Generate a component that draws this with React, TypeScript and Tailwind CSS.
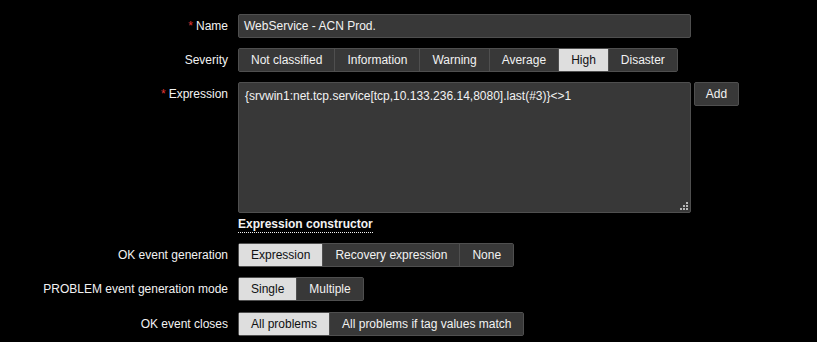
import React from "react"

type Seg = { label: string; active?: boolean }

function Segmented({ items }: { items: Seg[] }) {
  return (
    <div className="flex h-[24px] rounded-[2px] border border-[#4f4f4f]">
      {items.map((it, i) => (
        <span
          key={it.label}
          className={
            "flex items-center px-[12px] leading-[22px] " +
            (i > 0 ? "border-l border-[#4f4f4f] " : "") +
            (it.active ? "bg-[#dedede] text-[#0e1012]" : "bg-[#383838] text-[#f2f2f2]")
          }
        >
          {it.label}
        </span>
      ))}
    </div>
  )
}

function Label({ text, required, top }: { text: string; required?: boolean; top?: boolean }) {
  return (
    <div
      className={
        "w-[238px] shrink-0 pr-[10px] text-right text-[#f2f2f2] " +
        (top ? "pt-[3px]" : "flex items-center justify-end")
      }
    >
      {required && <span className="mr-[3px] text-[#e33734]">*</span>}
      {text}
    </div>
  )
}

export default function App() {
  return (
    <div className="h-[342px] w-[817px] overflow-hidden bg-black pt-[14px] font-['Liberation_Sans',Arial,sans-serif] text-[12px]">
      <div className="flex flex-col gap-[10px]">
        <div className="flex h-[24px]">
          <Label text="Name" required />
          <div className="flex h-[24px] w-[453px] items-center rounded-[2px] border border-[#4f4f4f] bg-[#383838] px-[5px] text-[#f2f2f2]">
            WebService - ACN Prod.
          </div>
        </div>

        <div className="flex h-[24px]">
          <Label text="Severity" />
          <Segmented
            items={[
              { label: "Not classified" },
              { label: "Information" },
              { label: "Warning" },
              { label: "Average" },
              { label: "High", active: true },
              { label: "Disaster" },
            ]}
          />
        </div>

        <div className="flex">
          <Label text="Expression" required top />
          <div className="flex flex-col">
            <div className="flex gap-[3px]">
              <div className="relative h-[131px] w-[453px] rounded-[2px] border border-[#4f4f4f] bg-[#383838] px-[6px] pt-[4px] text-[#f2f2f2]">
                {"{srvwin1:net.tcp.service[tcp,10.133.236.14,8080].last(#3)}<>1"}
                <svg className="absolute bottom-[2px] right-[2px]" width="8" height="8" viewBox="0 0 8 8">
                  <g fill="#b8b8b8">
                    <rect x="6" y="0" width="2" height="2" />
                    <rect x="3" y="3" width="2" height="2" />
                    <rect x="6" y="3" width="2" height="2" />
                    <rect x="0" y="6" width="2" height="2" />
                    <rect x="3" y="6" width="2" height="2" />
                    <rect x="6" y="6" width="2" height="2" />
                  </g>
                </svg>
              </div>
              <button className="flex h-[24px] w-[45px] items-center justify-center rounded-[2px] border border-[#4f4f4f] bg-[#383838] text-[#f2f2f2]">
                Add
              </button>
            </div>
            <div className="mt-[2px]">
              <span className="border-b border-dotted border-[#f2f2f2] pb-[1px] font-bold text-[#f2f2f2]">
                Expression constructor
              </span>
            </div>
          </div>
        </div>

        <div className="flex h-[24px]">
          <Label text="OK event generation" />
          <Segmented
            items={[{ label: "Expression", active: true }, { label: "Recovery expression" }, { label: "None" }]}
          />
        </div>

        <div className="flex h-[24px]">
          <Label text="PROBLEM event generation mode" />
          <Segmented items={[{ label: "Single", active: true }, { label: "Multiple" }]} />
        </div>

        <div className="mt-[1px] flex h-[24px]">
          <Label text="OK event closes" />
          <Segmented
            items={[{ label: "All problems", active: true }, { label: "All problems if tag values match" }]}
          />
        </div>
      </div>
    </div>
  )
}
